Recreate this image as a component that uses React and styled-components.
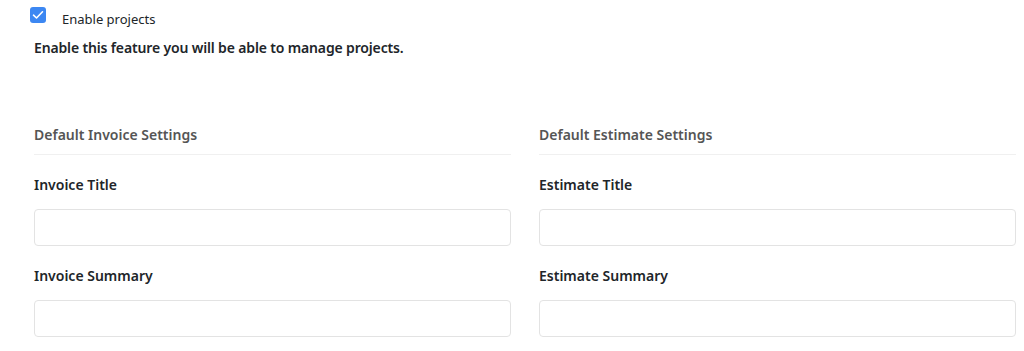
import React from "react";
import styled, { createGlobalStyle } from "styled-components";

const GlobalStyle = createGlobalStyle`
  body {
    margin: 0;
    background: #fff;
    font-family: "Noto Sans", "Open Sans", sans-serif;
    color: #212529;
  }
`;

const Page = styled.div({
  padding: "6px 8px 0 34px",
});

const CheckRow = styled.label({
  display: "flex",
  alignItems: "flex-start",
  gap: "16px",
  marginLeft: "-4px",
  height: "24px",
  cursor: "pointer",
});

const CheckBox = styled.span({
  width: "16px",
  height: "16px",
  marginTop: "1px",
  borderRadius: "3px",
  background: "#3c87f2",
  display: "flex",
  alignItems: "center",
  justifyContent: "center",
  flexShrink: 0,
});

const CheckText = styled.span({
  fontSize: "13px",
  lineHeight: "20px",
  paddingTop: "3px",
  color: "#212529",
});

const Description = styled.p({
  margin: "7px 0 0",
  fontSize: "14px",
  lineHeight: "22px",
  fontWeight: 600,
  letterSpacing: "-0.15px",
  color: "#212529",
});

const Columns = styled.div({
  display: "grid",
  gridTemplateColumns: "1fr 1fr",
  columnGap: "28px",
  marginTop: "65px",
});

const Section = styled.section({
  display: "flex",
  flexDirection: "column",
});

const SectionTitle = styled.h3({
  margin: 0,
  paddingBottom: "8px",
  borderBottom: "1px solid #f0f0f0",
  fontSize: "14px",
  lineHeight: "22px",
  fontWeight: 600,
  color: "#555",
});

const Field = styled.div({
  paddingTop: "19px",
  display: "flex",
  flexDirection: "column",
});

const Label = styled.label({
  fontSize: "14px",
  lineHeight: "22px",
  fontWeight: 600,
  color: "#212529",
  marginBottom: "13px",
});

const Input = styled.input({
  height: "37px",
  boxSizing: "border-box",
  border: "1px solid #e3e3e3",
  borderRadius: "4px",
  padding: "0 12px",
  fontSize: "14px",
  fontFamily: "inherit",
  outline: "none",
  "&:focus": {
    borderColor: "#3c87f2",
  },
});

const sections = [
  {
    title: "Default Invoice Settings",
    fields: ["Invoice Title", "Invoice Summary"],
  },
  {
    title: "Default Estimate Settings",
    fields: ["Estimate Title", "Estimate Summary"],
  },
];

export default function App() {
  return (
    <Page>
      <GlobalStyle />
      <CheckRow>
        <CheckBox>
          <svg width="12" height="10" viewBox="0 0 12 10" fill="none">
            <path
              d="M1.5 5.2 L4.5 8 L10.5 1.8"
              stroke="#fff"
              strokeWidth="1.6"
              strokeLinecap="round"
              strokeLinejoin="round"
            />
          </svg>
        </CheckBox>
        <CheckText>Enable projects</CheckText>
      </CheckRow>
      <Description>
        Enable this feature you will be able to manage projects.
      </Description>
      <Columns>
        {sections.map((section) => (
          <Section key={section.title}>
            <SectionTitle>{section.title}</SectionTitle>
            {section.fields.map((name) => (
              <Field key={name}>
                <Label>{name}</Label>
                <Input type="text" />
              </Field>
            ))}
          </Section>
        ))}
      </Columns>
    </Page>
  );
}
